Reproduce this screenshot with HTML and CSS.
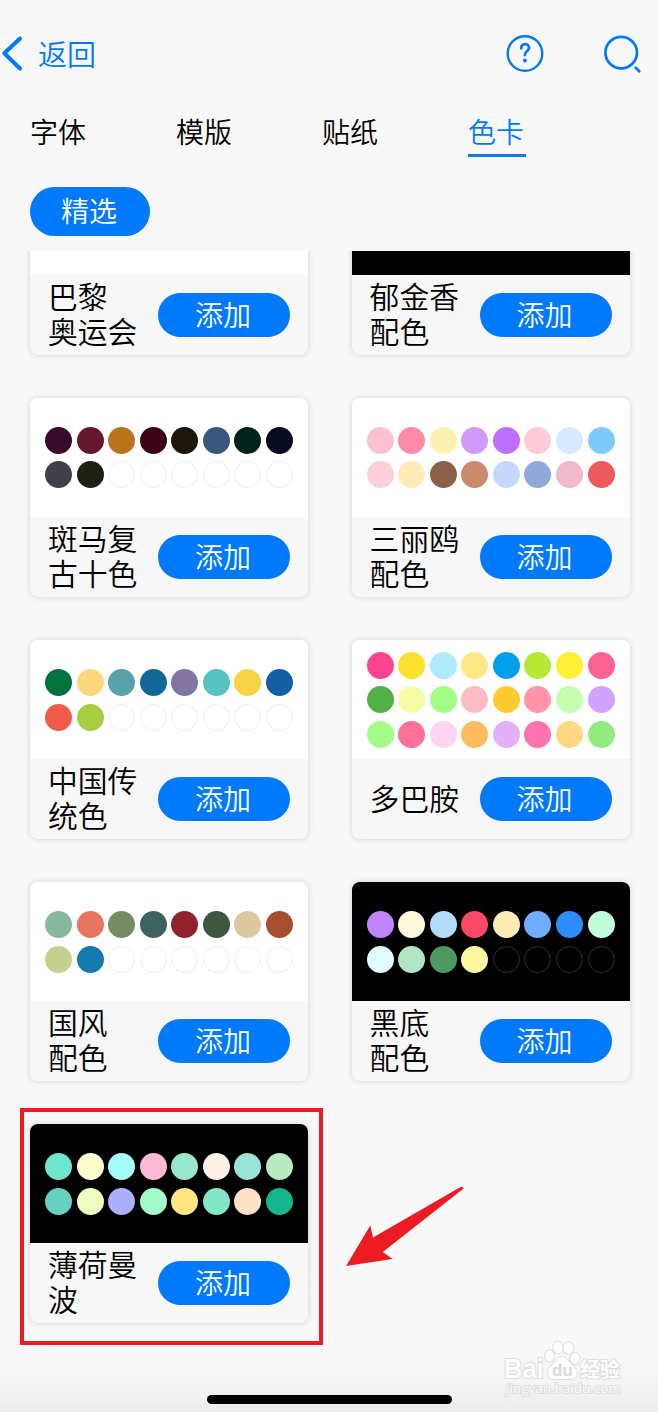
FILE: index.html
```
<!DOCTYPE html>
<html lang="zh-CN">

<head>
    <meta charset="UTF-8">
    <meta name="viewport" content="width=device-width, initial-scale=1.0">
    <title>色卡</title>
    <link rel="stylesheet" href="styles.css">
</head>

<body>
    <header class="navbar">
        <a class="back">
            <svg width="24" height="38" viewBox="0 0 24 38" fill="none" stroke="currentColor" stroke-width="4" stroke-linecap="round" stroke-linejoin="round"><path d="M20 3.500 4.300 18.300 20 33.500"/></svg>
            <span>返回</span>
        </a>
        <div class="actions">
            <svg width="38" height="38" viewBox="0 0 38 38" fill="none" stroke="currentColor" stroke-width="2.4" stroke-linecap="round">
                <circle cx="19" cy="18.500" r="17.300"/>
                <path d="M15.200 13.400c0-5.800 7.800-5.400 7.800-.7 0 3.600-4.100 3-4.100 7.400" stroke-width="2.700"/>
                <circle cx="18.900" cy="25.500" r="1.900" fill="currentColor" stroke="none"/>
            </svg>
            <svg width="38" height="38" viewBox="0 0 38 38" fill="none" stroke="currentColor" stroke-width="2.700" stroke-linecap="round">
                <circle cx="18.200" cy="17.600" r="15.800"/>
                <path d="m32.600 32.600 3.600 3.600"/>
            </svg>
        </div>
    </header>

    <nav class="tabs">
        <a class="tab">字体</a>
        <a class="tab">模版</a>
        <a class="tab">贴纸</a>
        <a class="tab active">色卡</a>
    </nav>

    <div class="filters">
        <button class="pill">精选</button>
    </div>

    <main class="scroller">
        <div class="grid">
            <section class="card">
                <div class="preview"></div>
                <div class="info">
                    <h2>巴黎<br>奥运会</h2>
                    <button class="add">添加</button>
                </div>
            </section>

            <section class="card">
                <div class="preview dark"></div>
                <div class="info">
                    <h2>郁金香<br>配色</h2>
                    <button class="add">添加</button>
                </div>
            </section>

            <section class="card">
                <div class="preview">
                    <i style="background:#380b28"></i><i style="background:#63182f"></i><i style="background:#b8731c"></i><i style="background:#3d0115"></i><i style="background:#1b160e"></i><i style="background:#3a587b"></i><i style="background:#012219"></i><i style="background:#090b23"></i>
                    <i style="background:#413f4b"></i><i style="background:#1f2013"></i><i class="empty"></i><i class="empty"></i><i class="empty"></i><i class="empty"></i><i class="empty"></i><i class="empty"></i>
                </div>
                <div class="info">
                    <h2>斑马复<br>古十色</h2>
                    <button class="add">添加</button>
                </div>
            </section>

            <section class="card">
                <div class="preview">
                    <i style="background:#fdc1d0"></i><i style="background:#fe8ba8"></i><i style="background:#fdf1b1"></i><i style="background:#d09afb"></i><i style="background:#bd6ffb"></i><i style="background:#fecbd9"></i><i style="background:#d6e9fd"></i><i style="background:#80c9fb"></i>
                    <i style="background:#fdcfda"></i><i style="background:#feebb8"></i><i style="background:#8b614a"></i><i style="background:#c98a6d"></i><i style="background:#c5d7fd"></i><i style="background:#8fa9dc"></i><i style="background:#efbacb"></i><i style="background:#ee5a5c"></i>
                </div>
                <div class="info">
                    <h2>三丽鸥<br>配色</h2>
                    <button class="add">添加</button>
                </div>
            </section>

            <section class="card">
                <div class="preview">
                    <i style="background:#02733f"></i><i style="background:#fcd77b"></i><i style="background:#58a2ab"></i><i style="background:#126796"></i><i style="background:#8375a2"></i><i style="background:#57c2c1"></i><i style="background:#f9d347"></i><i style="background:#125fa5"></i>
                    <i style="background:#f15b4a"></i><i style="background:#a7cd43"></i><i class="empty"></i><i class="empty"></i><i class="empty"></i><i class="empty"></i><i class="empty"></i><i class="empty"></i>
                </div>
                <div class="info">
                    <h2>中国传<br>统色</h2>
                    <button class="add">添加</button>
                </div>
            </section>

            <section class="card">
                <div class="preview">
                    <i style="background:#fe4490"></i><i style="background:#fee02e"></i><i style="background:#b0eafe"></i><i style="background:#fde886"></i><i style="background:#019ee9"></i><i style="background:#b7e936"></i><i style="background:#fef035"></i><i style="background:#fe6194"></i>
                    <i style="background:#51af45"></i><i style="background:#f6fca6"></i><i style="background:#a2fe86"></i><i style="background:#fdbbc3"></i><i style="background:#fdca2f"></i><i style="background:#fe95aa"></i><i style="background:#c6feb1"></i><i style="background:#d2a3fc"></i>
                    <i style="background:#a2fe86"></i><i style="background:#fe7096"></i><i style="background:#fdd4f2"></i><i style="background:#febb60"></i><i style="background:#e5b0fb"></i><i style="background:#fe72ad"></i><i style="background:#fdd982"></i><i style="background:#92ea82"></i>
                </div>
                <div class="info">
                    <h2>多巴胺</h2>
                    <button class="add">添加</button>
                </div>
            </section>

            <section class="card">
                <div class="preview">
                    <i style="background:#8ab89d"></i><i style="background:#e9755f"></i><i style="background:#758c63"></i><i style="background:#3e625d"></i><i style="background:#90222e"></i><i style="background:#3e5741"></i><i style="background:#dcc9a2"></i><i style="background:#a54f2e"></i>
                    <i style="background:#c5cf8e"></i><i style="background:#157aad"></i><i class="empty"></i><i class="empty"></i><i class="empty"></i><i class="empty"></i><i class="empty"></i><i class="empty"></i>
                </div>
                <div class="info">
                    <h2>国风<br>配色</h2>
                    <button class="add">添加</button>
                </div>
            </section>

            <section class="card">
                <div class="preview dark">
                    <i style="background:#c184fb"></i><i style="background:#fefade"></i><i style="background:#b3dcfa"></i><i style="background:#fe4868"></i><i style="background:#fdedb4"></i><i style="background:#71adfc"></i><i style="background:#2e8dfd"></i><i style="background:#c0fedc"></i>
                    <i style="background:#e1fcfe"></i><i style="background:#b0e6c6"></i><i style="background:#4d9962"></i><i style="background:#fdf7a0"></i><i class="empty"></i><i class="empty"></i><i class="empty"></i><i class="empty"></i>
                </div>
                <div class="info">
                    <h2>黑底<br>配色</h2>
                    <button class="add">添加</button>
                </div>
            </section>

            <section class="card marked">
                <div class="preview dark">
                    <i style="background:#6de5cf"></i><i style="background:#fefdcc"></i><i style="background:#a6fdf7"></i><i style="background:#feb8d3"></i><i style="background:#97e7cf"></i><i style="background:#fef0e6"></i><i style="background:#99e3d7"></i><i style="background:#b8ebc1"></i>
                    <i style="background:#66d1be"></i><i style="background:#eefdc2"></i><i style="background:#aeaffb"></i><i style="background:#a3fbcb"></i><i style="background:#fde681"></i><i style="background:#83e6c6"></i><i style="background:#fee2c8"></i><i style="background:#15b58d"></i>
                </div>
                <div class="info">
                    <h2>薄荷曼<br>波</h2>
                    <button class="add">添加</button>
                </div>
            </section>
        </div>
    </main>

    <!-- arrow pointing to the marked card -->
    <svg class="arrow" width="120" height="82" viewBox="0 0 120 82" fill="#ed1c24">
        <path d="M0 80 24.300 39.600 27 51.600 114.500 1Q116.800 0 117.600 2.400L36.800 66 46.600 73Z"/>
    </svg>

    <svg class="watermark" width="124" height="62" viewBox="0 0 124 62">
        <g class="outlined">
            <text class="latin" x="1" y="40" textLength="40" lengthAdjust="spacingAndGlyphs">Bai</text>
            <text class="cjk" x="77" y="39">经验</text>
            <text class="site" x="3" y="55" textLength="115">jingyan.baidu.com</text>
            <ellipse cx="46.500" cy="18" rx="4.400" ry="5.800"/>
            <ellipse cx="54.800" cy="9.500" rx="4.600" ry="6"/>
            <ellipse cx="65.500" cy="10.300" rx="4.800" ry="6"/>
            <ellipse cx="72" cy="20.500" rx="4.600" ry="5.700"/>
            <path d="M59 19c-5 0-6.500 4.500-9.500 7.500-4 4-6 7-4 11 2 4.500 7 3.500 14 3.500s12 1 14-3.500c1.500-4-1-7-5-11-3-3-4.500-7.500-9.500-7.500z"/>
        </g>
        <text class="du" x="49" y="38">du</text>
    </svg>

    <div class="home-bar"></div>
</body>

</html>
```
FILE: styles.css
```
* {
    box-sizing: border-box;
}

body {
    margin: 0;
    width: 658px;
    height: 1412px;
    overflow: hidden;
    position: relative;
    display: flex;
    flex-direction: column;
    background: linear-gradient(#f8f8f8 1350px, #f4f4f4 1385px, #ececec 1412px);
    color: #000;
    font-family: "Noto Sans CJK SC", sans-serif;
    font-weight: 350;
}

button {
    border: 0;
    padding: 0 2px 0 0;
    color: #fff;
    background: #007afb;
    font: inherit;
    font-size: 28px;
}

.navbar {
    display: flex;
    justify-content: space-between;
    align-items: center;
    height: 72px;
    margin-top: 18px;
    padding: 0 17px 0 0;
    color: #007afb;
}

.back {
    display: flex;
    align-items: center;
    gap: 14px;
    font-size: 29px;
    line-height: 38px;
}

.back span {
    padding-bottom: 3px;
}

.actions {
    display: flex;
    gap: 59px;
}

.tabs {
    display: flex;
    gap: 88px;
    height: 67px;
    padding: 21px 0 0 30px;
    font-size: 28px;
}

.tab {
    width: 58px;
    height: 46px;
    line-height: 40px;
    white-space: nowrap;
}

.tab.active {
    color: #007afb;
    border-bottom: 3px solid #0f7bdc;
}

.filters {
    padding: 30px 30px 0;
    height: 93.500px;
}

.pill {
    display: block;
    width: 120px;
    height: 49px;
    border-radius: 25px;
    line-height: 47px;
    padding-bottom: 2px;
}

/* Top row is half scrolled out under the filters */
.scroller {
    flex: 1;
    overflow: hidden;
}

.grid {
    display: grid;
    grid-template-columns: 278px 278px;
    gap: 43.600px;
    margin: -94.500px 0 0 30px;
}

.card {
    position: relative;
    height: 198.500px;
    border-radius: 8px;
    background: #f7f7f7;
    box-shadow: 0 0 6px rgba(0, 0, 0, 0.16);
}

.preview {
    height: 119px;
    padding: 0 15px;
    display: grid;
    grid-template-columns: repeat(8, 27px);
    justify-content: space-between;
    align-content: center;
    row-gap: 7.700px;
    background: #fff;
    border-radius: 8px 8px 0 0;
}

.preview i {
    height: 27px;
    border-radius: 50%;
}

.empty {
    border: 1px solid #ededed;
}

.dark {
    background: #000;
}

.dark .empty {
    border-color: #333;
}

.info {
    height: 79px;
    display: flex;
    align-items: center;
    justify-content: space-between;
    padding: 0 18px;
}

.info h2 {
    margin: 0;
    padding-bottom: 3px;
    font-size: 29.800px;
    font-weight: 350;
    line-height: 35px;
    white-space: nowrap;
}

.add {
    width: 132px;
    height: 44px;
    border-radius: 22px;
    line-height: 42px;
    padding-bottom: 2px;
}

.marked::after {
    content: "";
    position: absolute;
    inset: -16px -15px -22px -10px;
    border: 4px solid #ed1c24;
}

.arrow {
    position: absolute;
    left: 346px;
    top: 1186px;
}

.watermark {
    position: absolute;
    left: 503px;
    top: 1338px;
    overflow: visible;
}

.outlined {
    fill: #fdfdfd;
    stroke: #dedede;
    stroke-width: 2px;
    paint-order: stroke;
}

.latin {
    font: bold 27px "Liberation Sans", sans-serif;
}

.cjk {
    font: bold 20px "Noto Sans CJK SC", sans-serif;
}

.site {
    font: 13.500px "Open Sans", sans-serif;
}

.du {
    font: bold 17px "Liberation Sans", sans-serif;
    fill: #dadada;
}

.home-bar {
    position: absolute;
    left: 207px;
    top: 1395px;
    width: 245px;
    height: 9px;
    border-radius: 5px;
    background: #000;
}
```
